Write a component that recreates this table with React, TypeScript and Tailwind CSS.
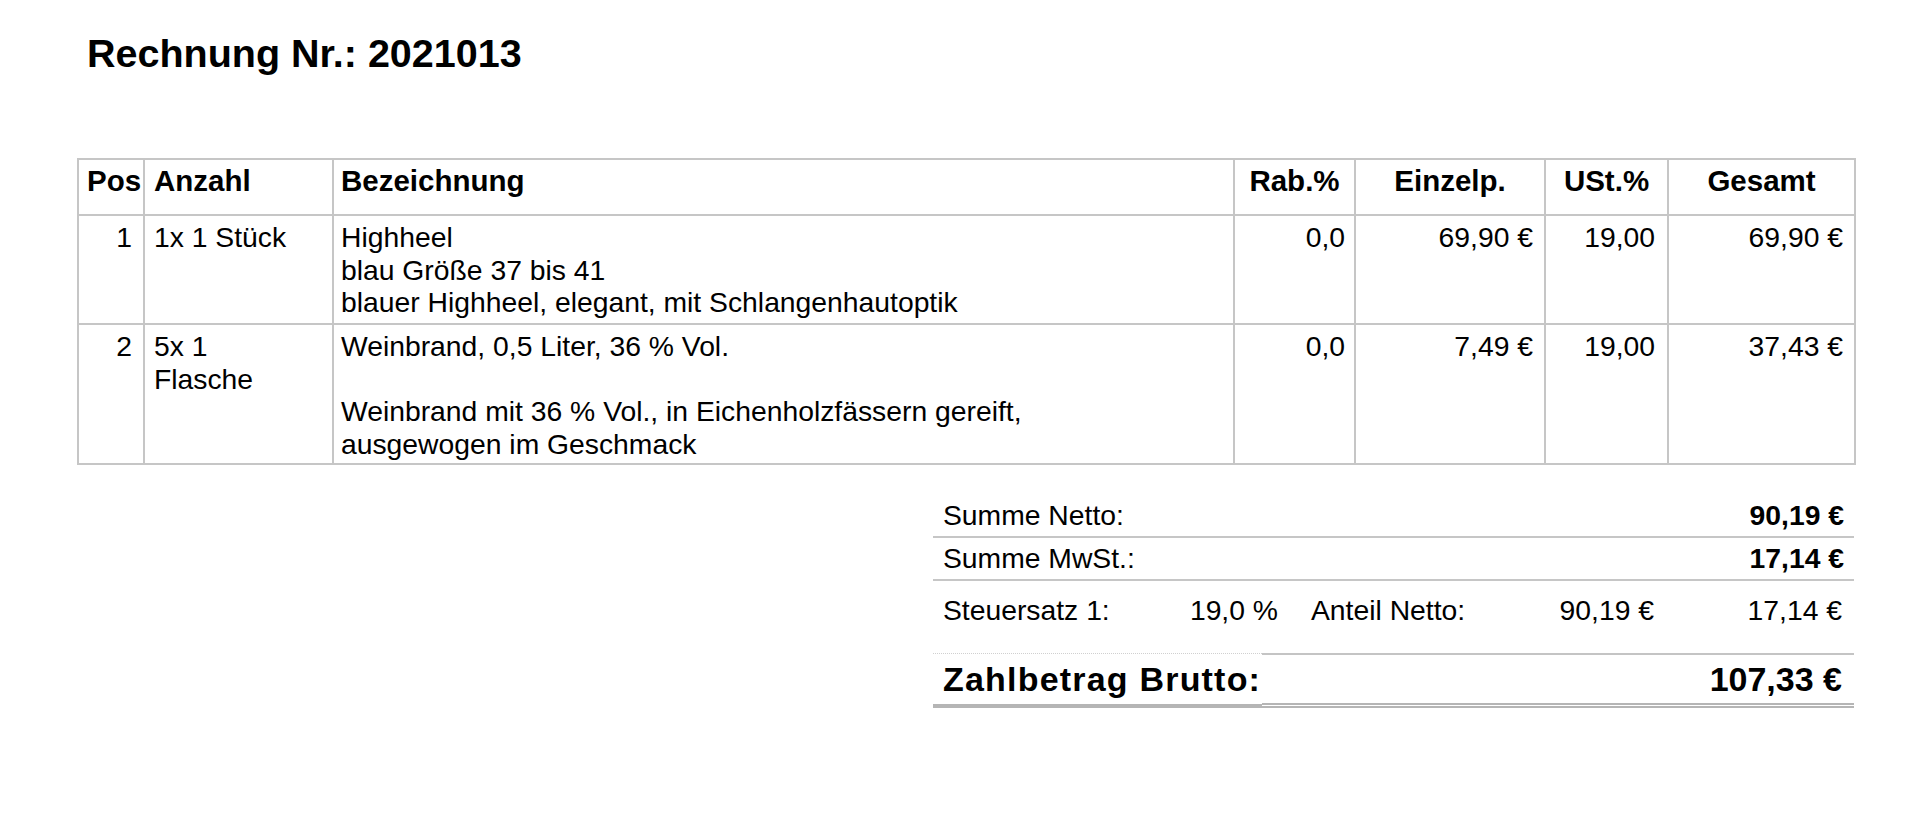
import React from "react";

interface Item {
  pos: number;
  qty: string[];
  text: string[];
  rab: string;
  price: string;
  tax: string;
  total: string;
  height: string;
}

const items: Item[] = [
  {
    pos: 1,
    qty: ["1x 1 Stück"],
    text: ["Highheel", "blau Größe 37 bis 41", "blauer Highheel, elegant, mit Schlangenhautoptik"],
    rab: "0,0",
    price: "69,90 €",
    tax: "19,00",
    total: "69,90 €",
    height: "h-[109px]",
  },
  {
    pos: 2,
    qty: ["5x 1", "Flasche"],
    text: [
      "Weinbrand, 0,5 Liter, 36 % Vol.",
      "",
      "Weinbrand mit 36 % Vol., in Eichenholzfässern gereift,",
      "ausgewogen im Geschmack",
    ],
    rab: "0,0",
    price: "7,49 €",
    tax: "19,00",
    total: "37,43 €",
    height: "h-[140px]",
  },
];

function Lines({ lines }: { lines: string[] }) {
  return (
    <>
      {lines.map((l, i) => (
        <div key={i} className="h-[32.5px] whitespace-nowrap">
          {l}
        </div>
      ))}
    </>
  );
}

function InvoiceTable() {
  const th = "border-2 border-[#c6c6c6] align-top pt-[5px] text-[29.5px] font-bold";
  const td = "border-2 border-[#c6c6c6] align-top pt-[5px]";
  return (
    <table className="ml-[77px] w-[1777px] table-fixed border-collapse text-[28.3px] leading-[32.5px] text-black">
      <colgroup>
        <col className="w-[66px]" />
        <col className="w-[189px]" />
        <col className="w-[901px]" />
        <col className="w-[121px]" />
        <col className="w-[190px]" />
        <col className="w-[123px]" />
        <col className="w-[187px]" />
      </colgroup>
      <thead>
        <tr className="h-[56px]">
          <th className={`${th} pl-[8px] text-left`}>Pos</th>
          <th className={`${th} pl-[9px] text-left`}>Anzahl</th>
          <th className={`${th} pl-[7px] text-left`}>Bezeichnung</th>
          <th className={`${th} text-center`}>Rab.%</th>
          <th className={`${th} text-center`}>Einzelp.</th>
          <th className={`${th} text-center`}>USt.%</th>
          <th className={`${th} text-center`}>Gesamt</th>
        </tr>
      </thead>
      <tbody>
        {items.map((it) => (
          <tr key={it.pos} className={it.height}>
            <td className={`${td} pr-[11px] text-right`}>{it.pos}</td>
            <td className={`${td} pl-[9px]`}>
              <Lines lines={it.qty} />
            </td>
            <td className={`${td} pl-[7px]`}>
              <Lines lines={it.text} />
            </td>
            <td className={`${td} pr-[9px] text-right`}>{it.rab}</td>
            <td className={`${td} pr-[11px] text-right`}>{it.price}</td>
            <td className={`${td} pr-[12px] text-right`}>{it.tax}</td>
            <td className={`${td} pr-[11px] text-right`}>{it.total}</td>
          </tr>
        ))}
      </tbody>
    </table>
  );
}

function Totals() {
  return (
    <div className="ml-[933px] mt-[30px] w-[921px] text-[28.3px] leading-[32.5px] text-black">
      <div className="flex h-[43px] items-start justify-between border-b-2 border-[#c6c6c6] px-[10px] pt-[4px]">
        <span>Summe Netto:</span>
        <span className="font-bold">90,19 €</span>
      </div>
      <div className="flex h-[43px] items-start justify-between border-b-2 border-[#c6c6c6] px-[10px] pt-[4px]">
        <span>Summe MwSt.:</span>
        <span className="font-bold">17,14 €</span>
      </div>
      <div className="flex h-[72px] items-start pt-[13px]">
        <span className="w-[237px] pl-[10px]">Steuersatz 1:</span>
        <span className="w-[120px] pr-[12px] text-right">19,0 %</span>
        <span className="w-[190px] pl-[21px]">Anteil Netto:</span>
        <span className="w-[186px] pr-[12px] text-right">90,19 €</span>
        <span className="w-[188px] pr-[12px] text-right">17,14 €</span>
      </div>
      <div className="flex text-[34px] font-bold leading-[39px]">
        <div className="w-[329px] border-t border-b-4 border-t-[#d0d0d0] border-b-[#b5b5b5] pl-[10px] pt-[6px] pb-[5px] tracking-[1.2px] [border-top-style:dotted] [border-bottom-style:solid]">
          Zahlbetrag Brutto:
        </div>
        <div className="flex-1 border-t-2 border-b-[5px] border-t-[#c4c4c4] border-b-[#b5b5b5] pr-[12px] pt-[5px] pb-[4px] text-right [border-bottom-style:double]">
          107,33 €
        </div>
      </div>
    </div>
  );
}

export default function App() {
  return (
    <div className="h-[820px] w-[1920px] bg-white font-['Liberation_Sans',Arial,sans-serif] text-black">
      <h1 className="ml-[87px] pt-[31px] text-[39.5px] font-bold leading-[45px]">Rechnung Nr.: 2021013</h1>
      <div className="mt-[82px]">
        <InvoiceTable />
      </div>
      <Totals />
    </div>
  );
}
